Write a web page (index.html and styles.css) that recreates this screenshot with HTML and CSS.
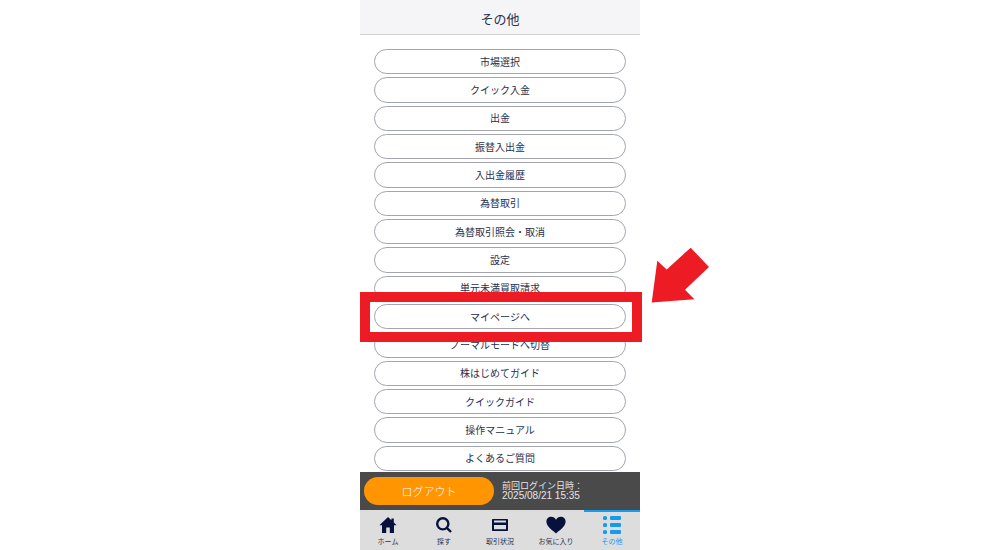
FILE: index.html
```html
<!DOCTYPE html>
<html lang="ja">
<head>
    <meta charset="UTF-8">
    <meta name="viewport" content="width=device-width, initial-scale=1.0">
    <title>その他</title>
    <link rel="stylesheet" href="styles.css">
</head>
<body>
    <div class="app">
        <header class="header">
            <h1>その他</h1>
        </header>
        <main class="menu">
            <button class="menu-item">市場選択</button>
            <button class="menu-item">クイック入金</button>
            <button class="menu-item">出金</button>
            <button class="menu-item">振替入出金</button>
            <button class="menu-item">入出金履歴</button>
            <button class="menu-item">為替取引</button>
            <button class="menu-item">為替取引照会・取消</button>
            <button class="menu-item">設定</button>
            <button class="menu-item">単元未満買取請求</button>
            <div class="marked">
                <button class="menu-item">マイページへ</button>
                <div class="frame"></div>
                <svg class="arrow" viewBox="0 0 60 58" aria-hidden="true">
                    <path d="M1.7 56.5 7.3 14.8 16.7 23.4 40.7 1.7 59 21 35 43.7 44.4 53.3Z"/>
                </svg>
            </div>
            <button class="menu-item">ノーマルモードへ切替</button>
            <button class="menu-item">株はじめてガイド</button>
            <button class="menu-item">クイックガイド</button>
            <button class="menu-item">操作マニュアル</button>
            <button class="menu-item">よくあるご質問</button>
        </main>
        <div class="session">
            <button class="logout">ログアウト</button>
            <p class="last-login">前回ログイン日時：<br><time>2025/08/21 15:35</time></p>
        </div>
        <nav class="tabs">
            <a href="#" class="tab">
                <svg class="icon" viewBox="0 0 20 20" aria-hidden="true">
                    <path d="M10 2 1.4 10.2H4V18H8.2V12.6H11.8V18H16V10.2H18.6L15.8 7.5V3.6H13.4V5.2Z"/>
                </svg>
                <span>ホーム</span>
            </a>
            <a href="#" class="tab">
                <svg class="icon" viewBox="0 0 20 20" aria-hidden="true">
                    <circle class="line" cx="8.8" cy="8.8" r="5.6"/>
                    <path class="line" d="M12.8 12.8 17 17"/>
                </svg>
                <span>探す</span>
            </a>
            <a href="#" class="tab">
                <svg class="icon" viewBox="0 0 20 20" aria-hidden="true">
                    <path fill-rule="evenodd" d="M2.8 4H17.2Q18 4 18 4.8V15.2Q18 16 17.2 16H2.8Q2 16 2 15.2V4.8Q2 4 2.8 4ZM4 5.6V7.6H16V5.6ZM4 10V14.2H16V10Z"/>
                </svg>
                <span>取引状況</span>
            </a>
            <a href="#" class="tab">
                <svg class="icon" viewBox="0 0 20 20" aria-hidden="true">
                    <path d="M10 18.4C6 15.2 0.4 11.4 0.4 6.6 0.4 3.6 2.6 1.8 5.2 1.8 7.3 1.8 9.1 2.8 10 4.7 10.9 2.8 12.7 1.8 14.8 1.8 17.4 1.8 19.6 3.6 19.6 6.6 19.6 11.4 14 15.2 10 18.4Z"/>
                </svg>
                <span>お気に入り</span>
            </a>
            <a href="#" class="tab active">
                <svg class="icon" viewBox="0 0 20 20" aria-hidden="true">
                    <rect x="1" y="1" width="4" height="4" rx="1.5"/>
                    <rect x="8" y="1" width="11" height="4" rx="1"/>
                    <rect x="1" y="8" width="4" height="4" rx="1.5"/>
                    <rect x="8" y="8" width="11" height="4" rx="1"/>
                    <rect x="1" y="15" width="4" height="4" rx="1.5"/>
                    <rect x="8" y="15" width="11" height="4" rx="1"/>
                </svg>
                <span>その他</span>
            </a>
        </nav>
    </div>
</body>
</html>
```

FILE: styles.css
```css
* {
    box-sizing: border-box;
}

body {
    margin: 0;
    background-color: #fff;
    color: #28304e;
    font-family: "Noto Sans CJK JP", sans-serif;
}

button {
    font-family: inherit;
    cursor: pointer;
}

.app {
    display: flex;
    flex-direction: column;
    width: 100%;
    max-width: 280px;
    height: 100vh;
    margin: 0 auto;
}

.header {
    padding: 9px 0 5px;
    border-bottom: 1px solid #cfcfcf;
    background-color: #f5f5f7;
    text-align: center;
}

.header h1 {
    margin: 0;
    font-size: 13px;
    font-weight: 400;
    line-height: 20px;
}

.menu {
    display: grid;
    flex: 1;
    grid-auto-rows: 1fr;
    gap: 3px;
    padding: 14px 14px 1px;
}

.menu-item {
    width: 100%;
    padding: 0;
    border: 1px solid #a3a6b1;
    border-radius: 13px;
    background-color: #fff;
    color: #28304e;
    font-size: 10px;
    line-height: 16px;
}

.marked {
    position: relative;
    display: flex;
}

.frame {
    position: absolute;
    inset: -12px -16px -13px -14px;
    border: 10px solid #ed1c24;
    pointer-events: none;
}

.arrow {
    position: absolute;
    top: -58px;
    left: calc(100% + 24px);
    width: 60px;
    height: 58px;
    fill: #ed1c24;
}

.session {
    display: flex;
    align-items: center;
    gap: 8px;
    height: 38px;
    padding: 0 4px;
    background-color: #4a4a4a;
}

.logout {
    width: 130px;
    height: 28px;
    padding: 0;
    border: none;
    border-radius: 14px;
    background-color: #ff9500;
    color: #fff;
    font-size: 11px;
    font-weight: 300;
}

.last-login {
    margin: 0;
    color: #e6e6e6;
    font-size: 9px;
    line-height: 10px;
}

.last-login time {
    font-family: "Liberation Sans", sans-serif;
    font-size: 10px;
}

.tabs {
    display: grid;
    grid-template-columns: repeat(5, 1fr);
    height: 40px;
    background-color: #ddd;
}

.tab {
    display: flex;
    flex-direction: column;
    align-items: center;
    gap: 1px;
    padding-top: 3px;
    border-top: 2px solid transparent;
    color: #28304e;
    font-size: 7px;
    line-height: 10px;
    text-decoration: none;
}

.icon {
    width: 20px;
    height: 20px;
    fill: #06123c;
}

.icon .line {
    fill: none;
    stroke: #06123c;
    stroke-width: 2.4;
}

.tab.active {
    border-top-color: #149bf0;
    color: #149bf0;
}

.tab.active .icon {
    fill: #149bf0;
}
```
